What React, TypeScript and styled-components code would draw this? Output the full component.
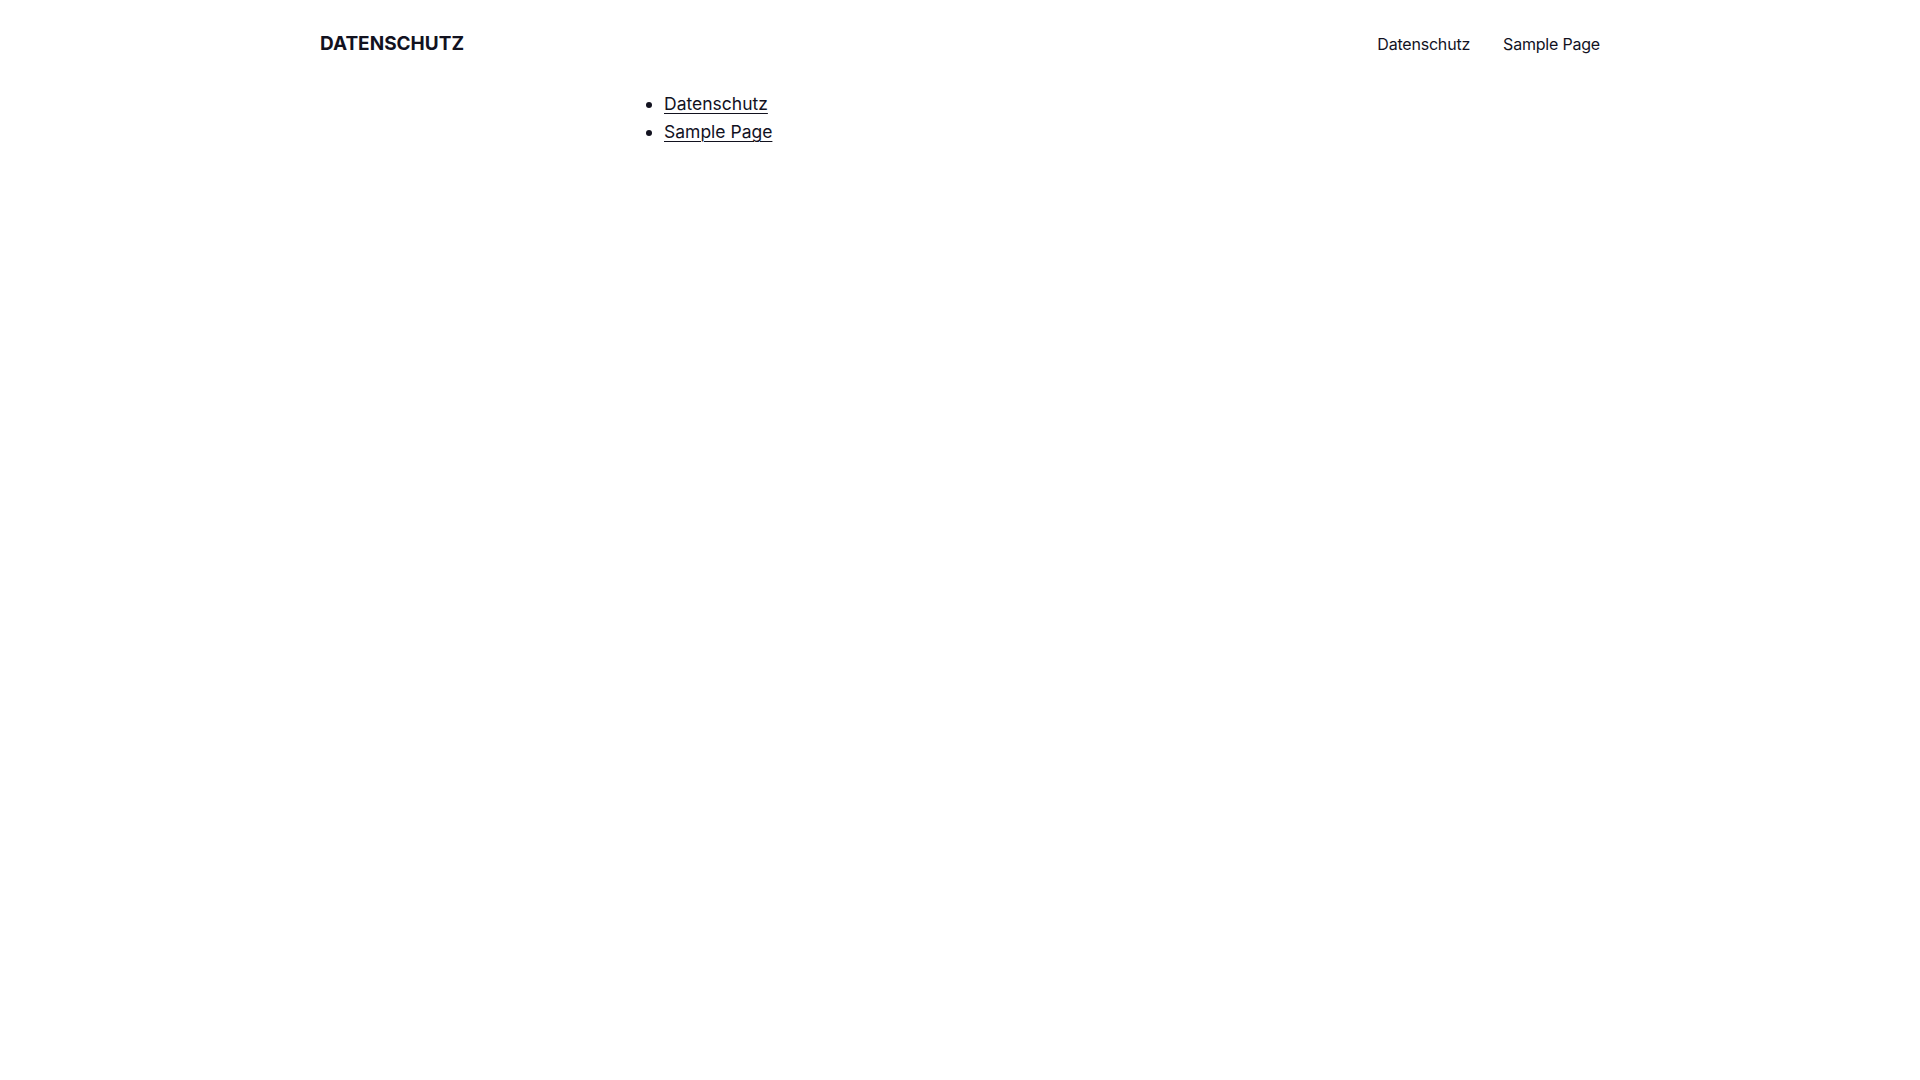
import React from 'react';
import styled, { createGlobalStyle } from 'styled-components';

const pages = ['Datenschutz', 'Sample Page'];

const App = () => {
  return (
    <>
      <GlobalStyle />
      <Header>
        <SiteTitle href="#">DATENSCHUTZ</SiteTitle>
        <Nav>
          {pages.map((p) => (
            <NavLink key={p} href="#">
              {p}
            </NavLink>
          ))}
        </Nav>
      </Header>
      <Main>
        <PageList>
          {pages.map((p) => (
            <li key={p}>
              <ListLink href="#">{p}</ListLink>
            </li>
          ))}
        </PageList>
      </Main>
    </>
  );
};

const GlobalStyle = createGlobalStyle`
  body {
    margin: 0;
    background: #ffffff;
    color: #12121f;
    font-family: Inter, "Noto Sans", sans-serif;
  }
`;

const Header = styled.header`
  display: flex;
  align-items: center;
  justify-content: space-between;
  max-width: 1280px;
  margin: 0 auto;
  height: 87px;
`;

const SiteTitle = styled.a`
  font-size: 19px;
  font-weight: 700;
  color: #12121f;
  text-decoration: none;
`;

const Nav = styled.nav`
  display: flex;
  gap: 33px;
  padding-top: 1px;
`;

const NavLink = styled.a`
  font-size: 16px;
  letter-spacing: -0.2px;
  color: #12121f;
  text-decoration: none;
`;

const Main = styled.main`
  max-width: 672px;
  margin: 0 auto;
`;

const PageList = styled.ul`
  margin: 3px 0 0;
  padding-left: 40px;
  font-size: 17.5px;
  line-height: 28px;
`;

const ListLink = styled.a`
  color: #12121f;
  text-decoration: underline;
  text-underline-offset: 3px;
  text-decoration-thickness: 1px;
`;

export default App;
